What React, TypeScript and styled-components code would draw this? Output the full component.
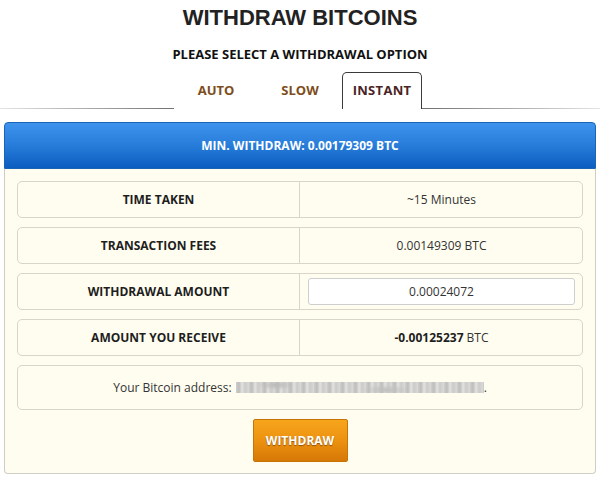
import styled, { createGlobalStyle } from 'styled-components';

const GlobalStyle = createGlobalStyle`
  body {
    margin: 0;
    background: #ffffff;
    font-family: 'Open Sans', 'Liberation Sans', sans-serif;
  }
`;

const Page = styled.div`
  width: 600px;
  display: flex;
  flex-direction: column;
  align-items: stretch;
`;

const Title = styled.h1`
  margin: 0;
  padding-top: 6px;
  text-align: center;
  font-family: 'Liberation Sans', Arial, sans-serif;
  font-size: 22px;
  line-height: 24px;
  font-weight: bold;
  color: #222;
`;

const Subtitle = styled.h2`
  margin: 16px 0 0;
  text-align: center;
  font-size: 13px;
  line-height: 17px;
  font-weight: 700;
  color: #111;
`;

const TabBar = styled.div`
  margin-top: 9px;
  height: 37px;
  display: flex;
  justify-content: center;
  padding-right: 4px;
  background: linear-gradient(to right, #e4e4e4 0%, #6e6e6e 30%, #6e6e6e 70%, #e4e4e4 100%) no-repeat left bottom / 100% 1px;
`;

const Tab = styled.div<{ $active?: boolean; $width: number }>`
  box-sizing: border-box;
  width: ${(p) => p.$width}px;
  height: 37px;
  display: flex;
  align-items: center;
  justify-content: center;
  background: #fff;
  font-size: 13px;
  font-weight: 700;
  letter-spacing: ${(p) => (p.$active ? '0.3px' : '0')};
  color: ${(p) => (p.$active ? '#4a2424' : '#7d4d1b')};
  border: 1px solid ${(p) => (p.$active ? '#3a3a3a' : '#fff')};
  border-bottom: none;
  border-radius: 5px 5px 0 0;
  padding-bottom: 2px;
`;

const Panel = styled.div`
  margin: 13px 4px 0;
  display: flex;
  flex-direction: column;
`;

const PanelHeader = styled.div`
  height: 44px;
  border: 1px solid #1b63b5;
  border-radius: 4px 4px 0 0;
  background: linear-gradient(to bottom, #3d93ec 0%, #2a7fdc 45%, #0b5dbf 100%);
  color: #fff;
  font-size: 12px;
  font-weight: 700;
  display: flex;
  align-items: center;
  justify-content: center;
  padding-bottom: 1px;
`;

const PanelBody = styled.div`
  border: 1px solid #cfcdc4;
  border-top: none;
  border-radius: 0 0 4px 4px;
  background: #fffdf0;
  padding: 12px 12px 11px;
  display: flex;
  flex-direction: column;
  gap: 9px;
`;

const Row = styled.div<{ $tall?: boolean }>`
  box-sizing: border-box;
  height: ${(p) => (p.$tall ? 45 : 37)}px;
  border: 1px solid #d9d6c8;
  border-radius: 5px;
  display: grid;
  grid-template-columns: ${(p) => (p.$tall ? '1fr' : '1fr 1fr')};
`;

const Label = styled.div`
  border-right: 1px solid #d9d6c8;
  display: flex;
  align-items: center;
  justify-content: center;
  font-size: 12px;
  font-weight: 700;
  color: #1e1e1e;
`;

const Value = styled.div`
  display: flex;
  align-items: center;
  justify-content: center;
  font-size: 12px;
  color: #333;
  padding: 0 7px 0 8px;

  strong {
    font-weight: 700;
    color: #1e1e1e;
  }
`;

const AmountInput = styled.input`
  box-sizing: border-box;
  width: 100%;
  height: 27px;
  border: 1px solid #cfcfcf;
  border-radius: 3px;
  background: #fff;
  text-align: center;
  font-family: 'Open Sans', 'Liberation Sans', sans-serif;
  font-size: 12px;
  color: #333;
  outline: none;
`;

const Address = styled.div`
  display: flex;
  align-items: center;
  justify-content: center;
  font-size: 12px;
  color: #333;
`;

const Blurred = styled.span`
  display: inline-block;
  width: 248px;
  height: 11px;
  margin-left: 4px;
  background:
    radial-gradient(ellipse 18px 5px at 40px 3px, #b4b4b4, transparent),
    radial-gradient(ellipse 24px 5px at 150px 8px, #bababa, transparent),
    repeating-linear-gradient(90deg, #cacaca 0px, #b7b7b7 3px, #e0e0e0 6px, #c6c6c6 9px, #d6d6d6 13px);
  filter: blur(0.7px);
  opacity: 0.9;
`;

const WithdrawButton = styled.button`
  align-self: center;
  width: 95px;
  height: 43px;
  border: 1px solid #c87405;
  border-radius: 2px;
  background: linear-gradient(to bottom, #f7a51c 0%, #ec9210 50%, #d67806 100%);
  color: #fff;
  font-family: 'Open Sans', 'Liberation Sans', sans-serif;
  font-size: 12px;
  font-weight: 700;
  text-shadow: 0 1px 1px rgba(90, 40, 0, 0.6);
  cursor: pointer;
`;

const rows = [
  { label: 'TIME TAKEN', value: '~15 Minutes' },
  { label: 'TRANSACTION FEES', value: '0.00149309 BTC' },
];

export default function App() {
  return (
    <Page>
      <GlobalStyle />
      <Title>WITHDRAW BITCOINS</Title>
      <Subtitle>PLEASE SELECT A WITHDRAWAL OPTION</Subtitle>
      <TabBar>
        <Tab $width={84}>AUTO</Tab>
        <Tab $width={84}>SLOW</Tab>
        <Tab $width={80} $active>
          INSTANT
        </Tab>
      </TabBar>
      <Panel>
        <PanelHeader>MIN. WITHDRAW: 0.00179309 BTC</PanelHeader>
        <PanelBody>
          {rows.map((r) => (
            <Row key={r.label}>
              <Label>{r.label}</Label>
              <Value>{r.value}</Value>
            </Row>
          ))}
          <Row>
            <Label>WITHDRAWAL AMOUNT</Label>
            <Value>
              <AmountInput defaultValue="0.00024072" />
            </Value>
          </Row>
          <Row>
            <Label>AMOUNT YOU RECEIVE</Label>
            <Value>
              <strong>-0.00125237</strong>&nbsp;BTC
            </Value>
          </Row>
          <Row $tall>
            <Address>
              Your Bitcoin address: <Blurred />.
            </Address>
          </Row>
          <WithdrawButton>WITHDRAW</WithdrawButton>
        </PanelBody>
      </Panel>
    </Page>
  );
}
